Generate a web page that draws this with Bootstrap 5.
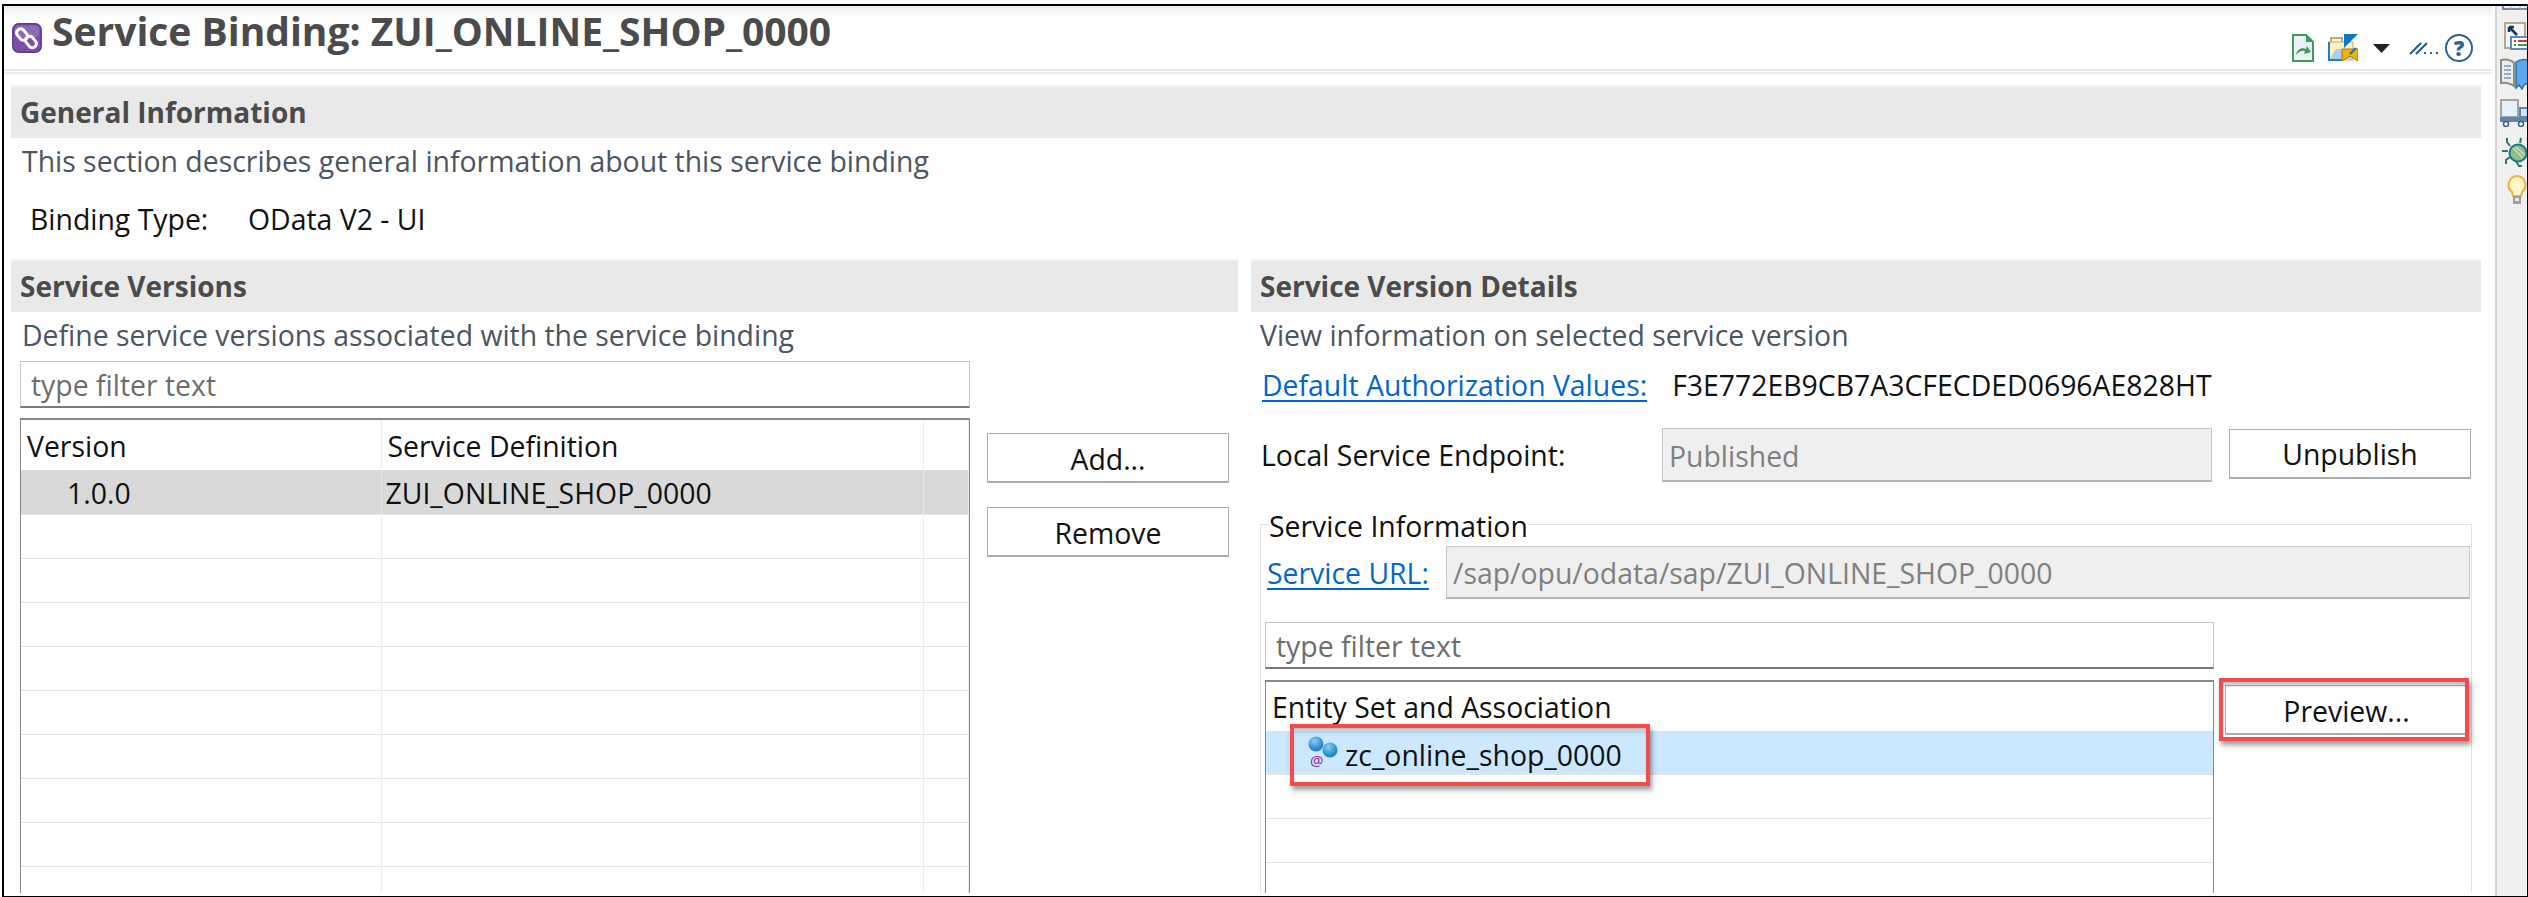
<!DOCTYPE html>
<html lang="en">
<head>
<meta charset="utf-8">
<title>Service Binding</title>
<link rel="stylesheet" href="https://cdn.jsdelivr.net/npm/bootstrap@5.3.0/dist/css/bootstrap.min.css">
<style>
html,body{height:897px;overflow:hidden;background:#fff}
body{font-family:"Open Sans","Noto Sans",sans-serif;font-size:28.4px;color:#111;line-height:1.2}
.sb-frame{margin:4px 0 0 2px;width:2526px;height:893px;border:solid #000;border-width:2px 1px 1px 2px}
.sb-main{width:2491px;flex:none;height:100%}
.sb-side{flex:1 1 auto;height:100%;background:#f0f0f0;border-left:2px solid #d4d4d4;overflow:hidden;padding-left:1px}
.sb-side svg{display:block;flex:none}
.sb-title{height:65px;width:2488px;background:linear-gradient(#ececec 0,#fff 12px);border-bottom:2px solid #e8e8e8;padding-left:8px}
.sb-rule{height:1px;width:2488px;margin-top:1px;border-top:2px solid #ececec}
.sb-h1{font-size:39px;font-weight:700;color:#4b4b4b;margin:0 0 0 10px;line-height:50px}
.sb-tools{margin-left:auto;margin-right:19px;margin-top:28px;gap:0}
.sb-help{width:28px;height:28px;border:2.5px solid #2a6496;border-radius:50%;color:#2a6496;font-size:21px;font-weight:800;line-height:1}
.sb-head{height:53px;background:#e9e9e9;border-top:2px solid #f3f3f3;padding-left:9px;font-size:28px;font-weight:700;color:#4b4b4b}
.sb-general{margin:11px 14px 0 7px}
.sb-desc{height:46px;color:#4c5560}
.sb-bind{height:70px;padding-left:19px;margin:0 0 5px 7px}
.sb-bind-k{width:218px}
.sb-cols{display:grid;grid-template-columns:1227px 1230px;gap:13px;margin-left:7px;height:634px;overflow:hidden}
.sb-pad{padding-left:9px}
.sb-filter.form-control{border:1px solid #c4c4c4;border-bottom:2px solid #7a7a7a;border-radius:0;height:47px;padding:2px 10px 0;font-size:28.4px;color:#333;box-shadow:none;background:#fff}
.sb-filter.form-control::placeholder{color:#6d6d6d;opacity:1}
.sb-lw{width:950px;flex:none}
.sb-tbl-wrap{margin-top:10px;height:480px;border:solid #888;border-width:2px 1px 0 1px;overflow:hidden}
.sb-tbl.table{margin:0;table-layout:fixed;width:100%;--bs-table-bg:#fff;--bs-table-color:#111;border-color:#e4e4e4}
.sb-tbl.table th,.sb-tbl.table td{padding:2px 0 0 6px;border-right:1px solid #ececec;border-bottom:1px solid #e4e4e4;font-weight:400;height:44px;vertical-align:middle;box-shadow:none}
.sb-tbl.table th{height:50px;border-bottom:0}
.sb-tbl.table tr.sb-sel td{background:#d9d9d9;--bs-table-bg:#d9d9d9;border-right-color:#e6e6e6}
.sb-ind{padding-left:46px!important}
.sb-btn.btn{background:#fff;border:solid #adadad;border-width:1px 1px 2px 1px;border-radius:0;font-size:28.4px;color:#111;height:50px;padding:3px 0 0;line-height:1;width:242px}
.sb-side-btns{margin:72px 0 0 17px;gap:24px}
.sb-link{color:#0066cc;text-decoration:underline;text-underline-offset:4px;white-space:nowrap}
.sb-auth{height:48px;margin-top:3px;padding-left:11px}
.sb-auth .sb-val{margin-left:25px}
.sb-end{margin-top:19px;height:54px;padding-left:10px}
.sb-end-l{width:401px}
.sb-ro.form-control{background:#efefef;border:1px solid #c6c6c6;border-bottom:2px solid #b5b5b5;border-radius:0;font-size:28.4px;color:#808080;padding:2px 6px 0;height:54px;opacity:1}
.sb-end .sb-ro{width:550px}
.sb-end .sb-btn{margin:-3px 0 0 17px}
.sb-group{margin:23px 0 0 9px;width:1212px;border:1px solid #e3e3e3;border-bottom:0;padding:0 1px 0 4px;height:400px;min-width:0}
.sb-group legend{float:none;width:auto;margin:0 0 0 4px;padding:4px 0 0;font-size:28.4px;line-height:34px;color:#111;background:#fff}
.sb-url{margin-top:3px;height:53px}
.sb-url .sb-link{margin:2px auto 0 2px}
.sb-url .sb-ro{height:53px;width:1024px;flex:none}
.sb-lower{margin-top:23px}
.sb-lower .sb-filter{width:949px}
.sb-tree{margin-top:11px;height:300px;border:solid #888;border-width:2px 1px 0 1px;width:949px;border-radius:0;overflow:visible}
.sb-tree .list-group-item{border:0;border-bottom:1px solid #e4e4e4;border-radius:0;height:44px;padding:0 0 0 6px;background:#fff;color:#111;position:relative}
.sb-tree .sb-thead{height:49px;border-bottom:0;padding-top:2px}
.sb-tree .list-group-item.sb-active{background:#cce8ff;padding-left:41px;gap:4px;z-index:2}
.sb-rowtxt{margin-top:5px}
.sb-note{position:absolute;border:4px solid #f44c4c;box-shadow:2px 4px 5px rgba(0,0,0,.4),inset 0 5px 4px -2px rgba(0,0,0,.28);pointer-events:none}
.sb-note-a{left:24px;top:-7px;width:360px;height:62px}
.sb-note-b{left:-6px;top:-7px;width:250px;height:63px}
.sb-prev{position:relative;margin:63px 0 0 11px;width:243px}
.sb-prev .sb-btn{width:243px}
</style>
</head>
<body>
<div class="sb-frame d-flex">
  <main class="sb-main">
    <header class="sb-title d-flex align-items-start">
      <svg width="30" height="30" viewBox="0 0 30 30" style="margin-top:17px"><rect x=".8" y=".8" width="28.4" height="28.4" rx="6" fill="#7a4fa8" stroke="#5d3a8c" stroke-width="1.5"/><rect x="2.5" y="2.5" width="25" height="12" rx="5" fill="#9d7cc4" opacity=".6"/><g fill="none" stroke="#fff" stroke-width="3"><rect x="6" y="5.5" width="8" height="12" rx="3.5" transform="rotate(-40 10 11.5)"/><rect x="15" y="13" width="8" height="12" rx="3.5" transform="rotate(-40 19 19)"/></g></svg>
      <h1 class="sb-h1">Service Binding: ZUI_ONLINE_SHOP_0000</h1>
      <div class="sb-tools d-flex align-items-center">
        <svg width="22" height="28" viewBox="0 0 22 28"><path d="M1 1H14L21 8V27H1Z" fill="#eaf1f5" stroke="#3f9a5f" stroke-width="2"/><path d="M14 1V8H21" fill="#3f9a5f"/><path d="M4 21c1-6 6-8 10-6l1-3 4 6-7 2 1-3c-3-1-6 0-9 4Z" fill="#3f9a5f"/></svg>
        <svg width="30" height="28" viewBox="0 0 30 28" style="margin-left:14px"><path d="M3 9V4h11v5" fill="none" stroke="#c9a56a" stroke-width="2"/><path d="M1 8H25V26H1Z" fill="#fdeec3" stroke="#c9a56a"/><path d="M1 26 8 15H25V26Z" fill="#a9cfee"/><path d="M1 8V26H14" fill="none" stroke="#1f7dc0" stroke-width="2"/><path d="M16 0H30L16 14Z" fill="#0a78c8"/><path d="M14 15H30V27L22 22 14 27Z" fill="#f3b000" stroke="#a8761a"/><path d="M22 20 28 14" stroke="#1f6fb0" stroke-width="2"/></svg>
        <svg width="17" height="9" viewBox="0 0 17 9" style="margin-left:15px"><path d="M0 0H17L8.500 9Z" fill="#222"/></svg>
        <svg width="29" height="14" viewBox="0 0 29 14" style="margin-left:19px"><path d="M1 13 12 2M7 13 18 2" stroke="#1f5f95" stroke-width="2.2"/><path d="M15 12h2M21 12h2M27 12h2" stroke="#1f5f95" stroke-width="2"/></svg>
        <div class="sb-help d-flex align-items-center justify-content-center" style="margin-left:7px">?</div>
      </div>
    </header>
    <div class="sb-rule"></div>

    <section class="sb-general">
      <div class="sb-head d-flex align-items-center">General Information</div>
      <div class="sb-desc d-flex align-items-center" style="padding-left:11px">This section describes general information about this service binding</div>
    </section>
    <div class="sb-bind d-flex align-items-center"><span class="sb-bind-k">Binding Type:</span><span>OData V2 - UI</span></div>

    <div class="sb-cols">
      <section>
        <div class="sb-head d-flex align-items-center">Service Versions</div>
        <div class="sb-desc d-flex align-items-center" style="padding-left:11px">Define service versions associated with the service binding</div>
        <div class="d-flex sb-pad" style="margin-top:3px">
          <div class="sb-lw">
            <input class="form-control sb-filter" placeholder="type filter text">
            <div class="sb-tbl-wrap">
              <table class="table sb-tbl">
                <colgroup><col style="width:360px"><col style="width:542px"><col></colgroup>
                <thead><tr><th>Version</th><th>Service Definition</th><th></th></tr></thead>
                <tbody>
                  <tr class="sb-sel"><td class="sb-ind">1.0.0</td><td style="padding-left:4px">ZUI_ONLINE_SHOP_0000</td><td></td></tr>
                  <tr><td></td><td></td><td></td></tr>
                  <tr><td></td><td></td><td></td></tr>
                  <tr><td></td><td></td><td></td></tr>
                  <tr><td></td><td></td><td></td></tr>
                  <tr><td></td><td></td><td></td></tr>
                  <tr><td></td><td></td><td></td></tr>
                  <tr><td></td><td></td><td></td></tr>
                  <tr><td></td><td></td><td></td></tr>
                  <tr><td></td><td></td><td></td></tr>
                </tbody>
              </table>
            </div>
          </div>
          <div class="d-flex flex-column sb-side-btns">
            <button class="btn sb-btn" type="button">Add...</button>
            <button class="btn sb-btn" type="button">Remove</button>
          </div>
        </div>
      </section>

      <section>
        <div class="sb-head d-flex align-items-center">Service Version Details</div>
        <div class="sb-desc d-flex align-items-center sb-pad">View information on selected service version</div>
        <div class="sb-auth d-flex align-items-center"><a class="sb-link" href="#">Default Authorization Values:</a><span class="sb-val">F3E772EB9CB7A3CFECDED0696AE828HT</span></div>
        <div class="sb-end d-flex align-items-center">
          <span class="sb-end-l">Local Service Endpoint:</span>
          <input class="form-control sb-ro" value="Published" disabled>
          <button class="btn sb-btn" type="button">Unpublish</button>
        </div>
        <fieldset class="sb-group">
          <legend>Service Information</legend>
          <div class="sb-url d-flex align-items-center">
            <a class="sb-link" href="#">Service URL:</a>
            <input class="form-control sb-ro" value="/sap/opu/odata/sap/ZUI_ONLINE_SHOP_0000" disabled>
          </div>
          <div class="sb-lower d-flex align-items-start">
            <div>
              <input class="form-control sb-filter" placeholder="type filter text">
              <ul class="list-group sb-tree">
                <li class="list-group-item sb-thead d-flex align-items-center">Entity Set and Association</li>
                <li class="list-group-item sb-active d-flex align-items-center">
                  <svg width="34" height="36" viewBox="0 0 34 36"><defs><radialGradient id="sbBall" cx=".4" cy=".3" r=".8"><stop offset="0" stop-color="#8fcdf2"/><stop offset=".6" stop-color="#2e93d6"/><stop offset="1" stop-color="#1d73b4"/></radialGradient></defs><circle cx="9" cy="9" r="7.500" fill="url(#sbBall)"/><circle cx="23" cy="15" r="7.500" fill="url(#sbBall)"/><text x="3" y="31" font-size="15" fill="#8a1a96" font-family="Open Sans">@</text></svg>
                  <span class="sb-rowtxt">zc_online_shop_0000</span>
                  <span class="sb-note sb-note-a"></span>
                </li>
                <li class="list-group-item"></li>
                <li class="list-group-item"></li>
              </ul>
            </div>
            <div class="sb-prev">
              <button class="btn sb-btn" type="button">Preview...</button>
              <span class="sb-note sb-note-b"></span>
            </div>
          </div>
        </fieldset>
      </section>
    </div>
  </main>

  <aside class="sb-side d-flex flex-column">
    <svg width="26" height="4" viewBox="0 0 26 4" style="margin-left:4px"><path d="M1 0V3H26" fill="none" stroke="#7a8aa0" stroke-width="2"/><path d="M9 0V3M18 0V3" stroke="#a8b2c0"/></svg>
    <svg width="26" height="28" viewBox="0 0 26 28" style="margin:12px 0 0 6px"><rect x="1" y="1" width="20" height="25" fill="#f5f5f5" stroke="#b5a987" stroke-width="2"/><path d="M5 5 13 13M5 5H10M5 5V10" stroke="#16335c" stroke-width="2.500" fill="none"/><rect x="7" y="15" width="19" height="12" fill="#fff" stroke="#5b8ac0" stroke-width="2"/><path d="M10 19h2" stroke="#d33" stroke-width="2"/><path d="M14 19h10" stroke="#d33" stroke-width="2"/><path d="M10 23h2M14 23h10" stroke="#3a9a5a" stroke-width="2"/></svg>
    <svg width="28" height="32" viewBox="0 0 28 32" style="margin:8px 0 0 2px"><path d="M1 2C6 1 11 2 14 5V28C10 25 6 24 1 25Z" fill="#e6edf3" stroke="#8a8f78" stroke-width="2"/><path d="M4 8h7M4 12h7M4 16h7M4 20h7" stroke="#7d94ad" stroke-width="1.500"/><path d="M16 4C19 2 24 1 28 2V25L24 27 22 31 19 27 16 30Z" fill="#5aa9ee" stroke="#2a6eb0" stroke-width="1.500"/></svg>
    <svg width="28" height="28" viewBox="0 0 28 28" style="margin:9px 0 0 2px"><rect x="1" y="1" width="17" height="17" fill="#e4f1fb" stroke="#a5a59a" stroke-width="2"/><rect x="20" y="9" width="8" height="9" fill="#d4e6f4" stroke="#5c86b3" stroke-width="2"/><rect x="0" y="18" width="28" height="5" fill="#5c86b3"/><circle cx="6" cy="25" r="2.500" fill="#fff" stroke="#3d5f85" stroke-width="1.500"/><circle cx="21" cy="25" r="2.500" fill="#fff" stroke="#3d5f85" stroke-width="1.500"/></svg>
    <svg width="26" height="30" viewBox="0 0 26 30" style="margin:10px 0 0 4px"><g stroke="#2f7668" stroke-width="2" fill="none"><path d="M8 9 5 5V1M6 14H0M8 20 4 23V27M14 24 17 29H20M18 6 19 1"/></g><ellipse cx="16" cy="16" rx="8.500" ry="8.500" fill="#8fbc8f" stroke="#1f7a80" stroke-width="2"/><path d="M11 11 21 21M14 10 23 18" stroke="#c7dfb8" stroke-width="1.500"/></svg>
    <svg width="20" height="30" viewBox="0 0 20 30" style="margin:8px 0 0 9px"><path d="M10 1a9 9 0 0 0-5 16l1 4h8l1-4a9 9 0 0 0-5-16Z" fill="#fff7c8" stroke="#f2b233" stroke-width="2"/><rect x="6" y="21" width="8" height="8" fill="#9aa0a6"/><rect x="8" y="23" width="4" height="3" fill="#e8e8e8"/></svg>
  </aside>
</div>
<script src="https://cdn.jsdelivr.net/npm/bootstrap@5.3.0/dist/js/bootstrap.bundle.min.js"></script>
</body>
</html>
